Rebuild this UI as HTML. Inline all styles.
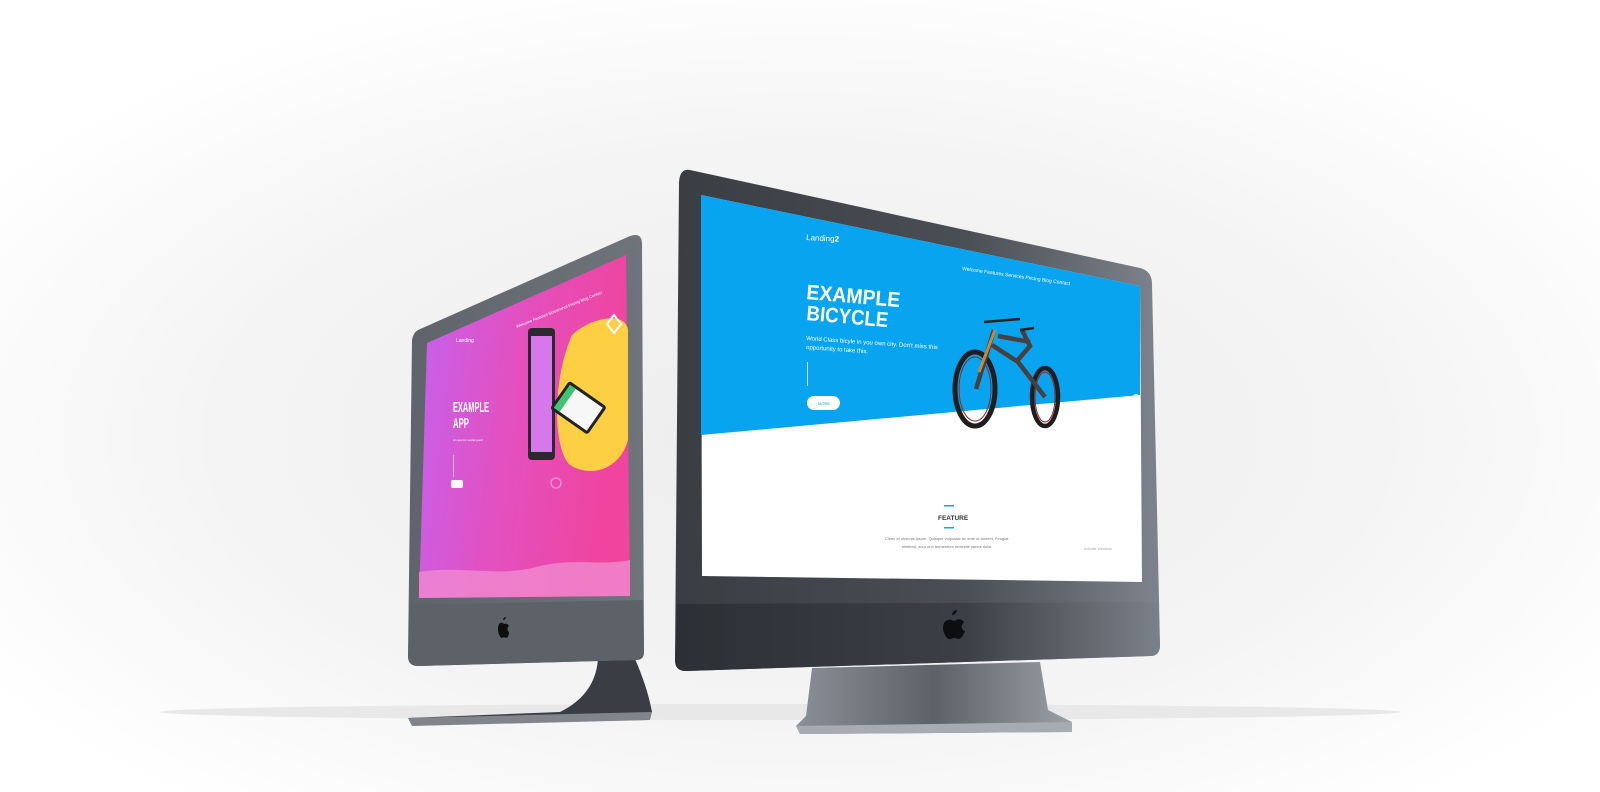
<!DOCTYPE html>
<html><head><meta charset="utf-8"><style>
html,body{margin:0;padding:0;width:1600px;height:792px;overflow:hidden;background:#fff}
svg{display:block}
text{font-family:"Liberation Sans",sans-serif}
</style></head><body>
<svg width="1600" height="792" viewBox="0 0 1600 792" xmlns="http://www.w3.org/2000/svg">
<defs>
<radialGradient id="bg" cx="50%" cy="55%" r="60%">
<stop offset="0" stop-color="#ededed"/><stop offset="0.6" stop-color="#f4f4f4"/><stop offset="1" stop-color="#ffffff"/>
</radialGradient>
<linearGradient id="pink" x1="0" y1="0" x2="1" y2="0.2">
<stop offset="0" stop-color="#c462ee"/><stop offset="0.5" stop-color="#e350c0"/><stop offset="1" stop-color="#f0449e"/>
</linearGradient>
<linearGradient id="bez" x1="0" y1="0" x2="1" y2="0">
<stop offset="0" stop-color="#3a3d42"/><stop offset="0.6" stop-color="#4a4e55"/><stop offset="1" stop-color="#7d838c"/>
</linearGradient>
<linearGradient id="chin" x1="0" y1="0" x2="1" y2="0">
<stop offset="0" stop-color="#2c2f34"/><stop offset="0.6" stop-color="#3c4046"/><stop offset="1" stop-color="#7b8189"/>
</linearGradient>
<linearGradient id="lbez" x1="0" y1="0" x2="1" y2="0">
<stop offset="0" stop-color="#5f646b"/><stop offset="1" stop-color="#6f747b"/>
</linearGradient>
<linearGradient id="stand" x1="0" y1="0" x2="1" y2="0">
<stop offset="0" stop-color="#8b9098"/><stop offset="0.5" stop-color="#5d6168"/><stop offset="1" stop-color="#9aa0a7"/>
</linearGradient>
</defs>
<rect width="1600" height="792" fill="url(#bg)"/>
<ellipse cx="780" cy="712" rx="620" ry="8" fill="#e8e8e8"/>

<!-- LEFT monitor stand -->
<path d="M598 655 L632 652 C640 670 648 690 652 712 L648 720 L412 724 L408 718 L560 712 C585 700 598 680 598 655 Z" fill="#3a3e44"/>
<path d="M408 718 L652 712 L650 720 L412 726 Z" fill="#80858c"/>
<!-- LEFT monitor body -->
<path d="M418 330 L630 236 Q642 232 642 244 L644 652 Q644 660 636 660 L418 666 Q408 666 408 656 L412 340 Q413 333 418 330 Z" fill="url(#lbez)"/>
<path d="M410 605 L643 600 L644 652 Q644 660 636 660 L418 666 Q408 666 408 656 Z" fill="#5d6268"/>
<!-- left screen -->
<path d="M427 343 L626 255 L630 596 L419 598 Z" fill="url(#pink)"/>
<path d="M419 572 C460 565 500 578 540 566 C575 558 600 566 630 560 L630 596 L419 598 Z" fill="#f089cf" opacity="0.8"/>
<!-- yellow blob -->
<path d="M572 335 C590 318 625 310 628 330 L628 440 C620 470 590 478 570 465 C553 450 552 380 572 335 Z" fill="#fcd042"/>
<rect x="528" y="328" width="27" height="132" rx="4" fill="#2a2a2e"/>
<rect x="531" y="336" width="21" height="116" fill="#d778ea"/>
<g transform="rotate(35 577 408)"><rect x="555" y="390" width="46" height="34" rx="3" fill="#222"/><rect x="558" y="393" width="40" height="28" fill="#f7f7f7"/><rect x="558" y="393" width="7" height="28" fill="#3fc471"/></g>
<path d="M614 315 L621 324 L614 333 L607 324 Z" fill="none" stroke="#fff" stroke-width="2"/>
<circle cx="556" cy="483" r="5" fill="none" stroke="#e98ad8" stroke-width="1.5"/>
<text x="453" y="412" font-size="15" font-weight="bold" fill="#fff" textLength="36" lengthAdjust="spacingAndGlyphs">EXAMPLE</text>
<text x="453" y="428" font-size="15" font-weight="bold" fill="#fff" textLength="16" lengthAdjust="spacingAndGlyphs">APP</text>
<text x="453" y="441" font-size="3" fill="#fff">An app for social good</text>
<text x="456" y="342" font-size="5" fill="#fff">Landing</text>
<rect x="453" y="455" width="1" height="22" fill="#e9a6e6"/>
<rect x="451" y="480" width="12" height="8" rx="2" fill="#fff"/>
<text x="512" y="318" font-size="4" fill="#fff" transform="rotate(-22 540 310)">Welcome Features Screenshot Pricing Blog Contact</text>

<!-- RIGHT monitor stand -->
<path d="M812 668 L1040 662 L1048 710 L1072 722 L1072 732 L800 734 L796 726 L806 716 Z" fill="url(#stand)"/>
<path d="M796 726 L1072 722 L1072 732 L800 734 Z" fill="#a7acb2"/>
<!-- RIGHT monitor body -->
<path d="M690 170 L1140 268 Q1152 271 1152 284 L1160 645 Q1160 656 1150 656 L686 671 Q675 671 675 660 L679 182 Q680 168 690 170 Z" fill="url(#bez)"/>
<path d="M677 604 L1158 602 L1160 645 Q1160 656 1150 656 L686 671 Q675 671 675 660 Z" fill="url(#chin)"/>
<!-- right screen -->
<path d="M701 195 L1140 286 L1142 582 L702 576 Z" fill="#fff"/>
<path d="M701 195 L1140 286 L1140 395 L701 435 Z" fill="#08a4ef"/>
<text x="806" y="240" font-size="8" fill="#fff" transform="rotate(3 806 240)">Landing<tspan font-weight="bold">2</tspan></text>
<text x="962" y="270" font-size="5" fill="#fff" transform="rotate(8 962 270)">Welcome  Features  Services  Pricing  Blog  Contact</text>
<text x="806" y="299" font-size="21" font-weight="bold" fill="#fff" transform="rotate(5 806 299)" textLength="94" lengthAdjust="spacingAndGlyphs">EXAMPLE</text>
<text x="806" y="320" font-size="21" font-weight="bold" fill="#fff" transform="rotate(5 806 320)" textLength="82" lengthAdjust="spacingAndGlyphs">BICYCLE</text>
<text x="806" y="340" font-size="6" fill="#fff" transform="rotate(4 806 340)">World Class bicyle in you own city. Don't miss this</text>
<text x="806" y="349" font-size="6" fill="#fff" transform="rotate(4 806 349)">opportunity to take this.</text>
<rect x="807" y="362" width="1" height="24" fill="#cfeaf9"/>
<rect x="807" y="396" width="33" height="14" rx="7" fill="#fff"/>
<text x="818" y="405" font-size="4" fill="#08a4ef">MORE</text>
<!-- bike -->
<g fill="none" stroke="#1e1e1e">
<ellipse cx="975" cy="389" rx="20" ry="37" stroke-width="5"/>
<ellipse cx="1045" cy="397" rx="13" ry="29" stroke-width="4.5"/>
</g>
<g fill="none" stroke="#8a2a2a" stroke-width="1"><ellipse cx="975" cy="389" rx="16" ry="32"/><ellipse cx="1045" cy="397" rx="10" ry="25"/></g>
<path d="M976 389 L994 330 M992 345 L1018 362 L1045 397 M998 336 L1030 342 M1016 362 L1030 346 L1022 330" fill="none" stroke="#4a3f3f" stroke-width="4.5"/>
<path d="M979 372 L995 330" stroke="#c28a3a" stroke-width="3"/>
<path d="M984 322 L1020 319 M1020 330 L1034 328" stroke="#222" stroke-width="2.5"/>
<rect x="944" y="505" width="10" height="1.5" fill="#08a4ef"/>
<text x="938" y="520" font-size="6.5" font-weight="bold" fill="#333">FEATURE</text>
<rect x="944" y="527" width="10" height="1.5" fill="#08a4ef"/>
<text x="885" y="540" font-size="4" fill="#777">Cleec et ulvernis ipsum. Quisque vulputate ac ante ut laoreet. Feugiat</text>
<text x="902" y="548" font-size="4" fill="#777">eleifend, arcu orci fermentum molestie varies dolor.</text>
<text x="1084" y="550" font-size="3.5" fill="#aaa">Activate Windows</text>
<circle cx="1136" cy="397" r="3" fill="#fff"/>
<!-- apple logos -->
<g fill="#0d0e10">
<path d="M952 615 c3 0 5 -3 5 -5 c-3 0 -5 3 -5 5 z"/>
<path d="M952 620 c-3 -1 -9 0 -9 8 c0 5 4 12 7 11 c2 0 3 -1 4 -1 c2 0 3 1 5 1 c3 -1 5 -5 6 -8 c-3 -1 -5 -5 -1 -9 c-2 -3 -6 -3 -8 -2 c-1 1 -3 1 -4 0 z"/>
</g>
<g fill="#0d0e10">
<path d="M503 620 c2 0 3 -2 3 -3 c-2 0 -3 2 -3 3 z"/>
<path d="M503 623 c-2 -1 -5 0 -5 6 c0 4 2 9 4 9 l2 -1 l2 1 c2 0 3 -4 3 -6 c-2 -1 -2 -5 0 -6 c-1 -2 -3 -3 -5 -2 z"/>
</g>
</svg>
</body></html>
